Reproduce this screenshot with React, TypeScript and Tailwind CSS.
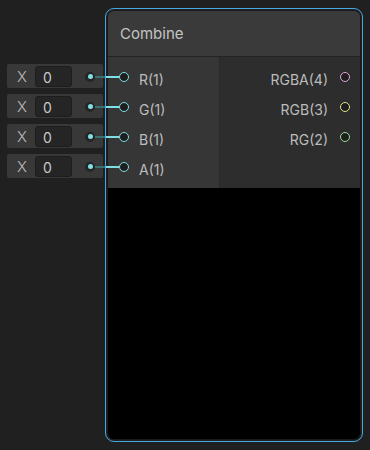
import React from "react";

const inputs = ["R(1)", "G(1)", "B(1)", "A(1)"];
const outputs = [
  { label: "RGBA(4)", color: "border-[#e3a6da]" },
  { label: "RGB(3)", color: "border-[#e2e28a]" },
  { label: "RG(2)", color: "border-[#94e094]" },
];

export default function App() {
  return (
    <div
      className="w-[370px] h-[450px] bg-[#202020] flex pt-[8px] pl-[7px] overflow-hidden"
      style={{ fontFamily: "Inter, 'Noto Sans', sans-serif" }}
    >
      {/* inline value fields */}
      <div className="flex flex-col gap-[6px] mt-[56px]">
        {inputs.map((p) => (
          <div key={p} className="flex items-center h-[24px]">
            <div className="w-[96px] h-[24px] bg-[#383838] rounded-[2px] flex items-center">
              <span className="w-[28px] text-center text-[15px] font-light text-[#bdbdbd] pl-[2px] pt-[2px]">X</span>
              <div className="w-[37px] h-[21px] bg-[#252525] border border-[#1d1d1d] rounded-[3px] flex items-center pl-[7px] pt-[2px] text-[14px] text-[#c8c8c8]">
                0
              </div>
              <div className="ml-[13px] mt-[1px] w-[10px] h-[10px] rounded-full bg-[#252525] flex items-center justify-center">
                <div className="w-[5px] h-[5px] rounded-full bg-[#7fe0e4]" />
              </div>
            </div>
            <div className="-ml-[8px] mt-[1px] w-[10px] h-[2px] bg-[#3d6e70]" />
          </div>
        ))}
      </div>

      {/* node */}
      <div className="w-[258px] h-[434px] border border-[#44a8e4] rounded-[9px] p-px">
        <div className="w-full h-full border border-[#1a1a1a] rounded-[7px] flex flex-col">
          <div className="h-[45px] bg-[#3a3a3a] rounded-t-[6px] flex items-center px-[12px] pt-[2px] text-[15px] text-[#c4c4c4]">
            Combine
          </div>
          <div className="h-px bg-[#232323]" />
          <div className="h-[131px] flex">
            <div className="w-[111px] bg-[#363636] flex flex-col pt-[5px]">
              {inputs.map((p) => (
                <div key={p} className="h-[30px] flex items-center">
                  <div className="-ml-[2px] w-[13px] h-[2px] bg-[#7fe0e4]" />
                  <div className="w-[10px] h-[10px] rounded-full border border-[#7fe0e4] bg-[#1e1e1e]" />
                  <span className="ml-[10px] pt-[4px] text-[14px] text-[#bcbcbc]">{p}</span>
                </div>
              ))}
            </div>
            <div className="flex-1 bg-[#2d2d2d] border-l border-[#2a2a2a] flex flex-col pt-[5px]">
              {outputs.map((o) => (
                <div key={o.label} className="h-[30px] flex items-center justify-end pr-[10px] gap-[12px]">
                  <span className="pt-[4px] text-[14px] text-[#bcbcbc]">{o.label}</span>
                  <div className={`w-[10px] h-[10px] rounded-full border ${o.color} bg-[#1e1e1e]`} />
                </div>
              ))}
            </div>
          </div>
          <div className="flex-1 bg-black rounded-b-[6px]" />
        </div>
      </div>
    </div>
  );
}
